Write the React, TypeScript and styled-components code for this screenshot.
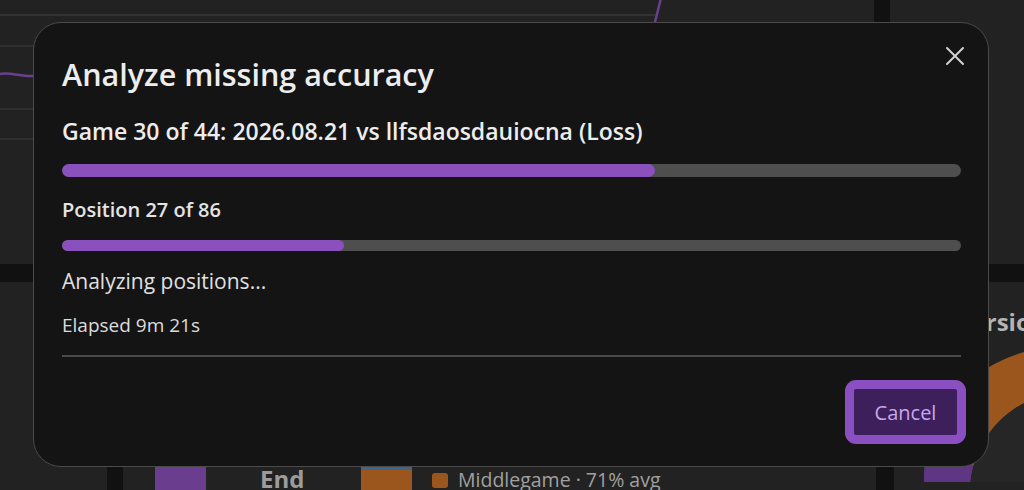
import styled, { createGlobalStyle } from 'styled-components'

const GlobalStyle = createGlobalStyle`
  html, body {
    margin: 0;
    padding: 0;
    background: #111111;
    overflow: hidden;
  }
  body {
    font-family: 'Open Sans', 'Noto Sans', sans-serif;
    color: #ececec;
  }
  * {
    box-sizing: border-box;
  }
`

const gameDone = 29
const gameTotal = 44
const posDone = 27
const posTotal = 86

const App = () => {
  return (
    <>
      <GlobalStyle />
      <Dashboard>
        <TopRow>
          <ChartPanel>
            <svg width="874" height="264" viewBox="0 0 874 264">
              <line x1="0" y1="15" x2="655" y2="15" stroke="#333" strokeWidth="2" />
              <line x1="0" y1="46" x2="874" y2="46" stroke="#333" strokeWidth="1.5" />
              <line x1="0" y1="109" x2="874" y2="109" stroke="#333" strokeWidth="1.5" />
              <line x1="0" y1="139" x2="874" y2="139" stroke="#333" strokeWidth="1.5" />
              <path
                d="M0 74 C 10 72, 22 77, 34 76 L 320 90 L 640 110 L 655 22 L 661 -2"
                fill="none"
                stroke="#6a3f8f"
                strokeWidth="2.5"
              />
            </svg>
          </ChartPanel>
          <Panel />
        </TopRow>
        <BottomRow>
          <Panel />
          <PhasePanel>
            <PhaseRow>
              <PhaseBar $color="#6b3d8f" $width={51} />
              <PhaseLabel>End</PhaseLabel>
              <StackBar>
                <StackTop />
              </StackBar>
              <Legend>
                <Swatch />
                <LegendText>Middlegame · 71% avg</LegendText>
              </Legend>
            </PhaseRow>
          </PhasePanel>
          <ConversionPanel>
            <PanelTitle>Conversion</PanelTitle>
            <Donut width="130" height="200" viewBox="894 290 130 200">
              <path
                d="M 929.8 441.9 A 145 145 0 0 1 1070 355 L 1070 400 A 100 100 0 0 0 973.3 474.6 Z"
                fill="#9a561c"
              />
              <path
                d="M 1070 355 A 145 145 0 0 1 1200 440 L 1150 460 A 100 100 0 0 0 1070 400 Z"
                fill="#9a561c"
              />
              <path
                d="M 925 500 A 145 145 0 0 1 929.8 441.9 L 973.3 474.6 A 100 100 0 0 0 970 500 Z"
                fill="#5f3683"
              />
              <circle cx="1070" cy="500" r="100" fill="#262626" />
            </Donut>
          </ConversionPanel>
        </BottomRow>
      </Dashboard>

      <Dialog role="dialog" aria-label="Analyze missing accuracy">
        <CloseButton aria-label="Close">
          <svg width="20" height="20" viewBox="0 0 20 20">
            <path d="M2 2 L18 18 M18 2 L2 18" stroke="#d2d2d2" strokeWidth="2" strokeLinecap="round" />
          </svg>
        </CloseButton>
        <Title>Analyze missing accuracy</Title>
        <GameLine>Game 30 of 44: 2026.08.21 vs llfsdaosdauiocna (Loss)</GameLine>
        <Track $height={13} $gap={19}>
          <Fill style={{ width: `${(gameDone / gameTotal) * 100}%` }} />
        </Track>
        <PositionLine>Position 27 of 86</PositionLine>
        <Track $height={11} $gap={17}>
          <Fill style={{ width: `${(posDone / posTotal) * 100}%` }} />
        </Track>
        <StatusLine>Analyzing positions...</StatusLine>
        <ElapsedLine>Elapsed 9m 21s</ElapsedLine>
        <Divider />
        <Footer>
          <CancelButton>Cancel</CancelButton>
        </Footer>
      </Dialog>
    </>
  )
}

export default App

const Dashboard = styled.div`
  display: grid;
  grid-template-rows: 264px 1fr;
  row-gap: 18px;
  width: 1024px;
  height: 490px;
  background: #111111;
  overflow: hidden;
`

const TopRow = styled.div`
  display: grid;
  grid-template-columns: 874px 1fr;
  column-gap: 16px;
`

const BottomRow = styled.div`
  display: grid;
  grid-template-columns: 107px 753px 1fr;
  column-gap: 16px;
  & > :last-child {
    margin-left: 2px;
  }
`

const Panel = styled.div`
  background: #222222;
`

const ChartPanel = styled(Panel)`
  overflow: hidden;
  svg {
    display: block;
  }
`

const PhasePanel = styled(Panel)`
  display: flex;
  flex-direction: column;
  justify-content: flex-end;
  overflow: hidden;
`

const PhaseRow = styled.div`
  display: flex;
  align-items: flex-start;
  height: 23px;
  padding-left: 32px;
`

const PhaseBar = styled.div<{ $color: string; $width: number }>`
  width: ${(p) => p.$width}px;
  height: 30px;
  background: ${(p) => p.$color};
`

const PhaseLabel = styled.div`
  width: 47px;
  margin-left: 54px;
  font-size: 24px;
  font-weight: 700;
  line-height: 24px;
  color: #9c9c9c;
  white-space: nowrap;
`

const StackBar = styled.div`
  width: 51px;
  height: 30px;
  margin-left: 54px;
  background: #9a561c;
`

const StackTop = styled.div`
  height: 3px;
  background: #3d668f;
`

const Legend = styled.div`
  display: flex;
  align-items: center;
  gap: 10px;
  margin-left: 20px;
  margin-top: 2px;
`

const Swatch = styled.span`
  width: 16px;
  height: 15px;
  border-radius: 3px;
  background: #9a561c;
`

const LegendText = styled.span`
  font-size: 19.5px;
  line-height: 22px;
  color: #a0a0a0;
  white-space: nowrap;
`

const ConversionPanel = styled(Panel)`
  position: relative;
  overflow: hidden;
`

const PanelTitle = styled.div`
  padding: 26px 0 0 18px;
  font-size: 24px;
  font-weight: 700;
  line-height: 28px;
  color: #b4b4b4;
  white-space: nowrap;
`

const Donut = styled.svg`
  position: absolute;
  left: 0;
  top: 0;
`

const Dialog = styled.div`
  position: fixed;
  left: 33px;
  top: 22px;
  width: 956px;
  height: 445px;
  display: flex;
  flex-direction: column;
  padding: 33px 27px 27px 28px;
  background: #141414;
  border: 1.5px solid #4b4b4b;
  border-radius: 28px;
`

const CloseButton = styled.button`
  position: absolute;
  top: 23px;
  right: 23px;
  display: flex;
  padding: 0;
  border: none;
  background: transparent;
  cursor: pointer;
`

const Title = styled.h2`
  margin: 0;
  font-size: 30.5px;
  font-weight: 600;
  line-height: 36px;
  color: #ededed;
`

const GameLine = styled.div`
  margin-top: 25px;
  font-size: 23px;
  font-weight: 600;
  line-height: 28px;
  color: #ededed;
`

const Track = styled.div<{ $height: number; $gap: number }>`
  margin-top: ${(p) => p.$gap}px;
  height: ${(p) => p.$height}px;
  border-radius: 999px;
  background: #4e4e4e;
  overflow: hidden;
`

const Fill = styled.div`
  height: 100%;
  border-radius: 999px;
  background: #8a50bd;
`

const PositionLine = styled.div`
  margin-top: 20px;
  font-size: 20px;
  font-weight: 600;
  line-height: 26px;
  color: #e4e4e4;
`

const StatusLine = styled.div`
  margin-top: 17px;
  font-size: 21px;
  font-weight: 400;
  line-height: 26px;
  color: #e0e0e0;
`

const ElapsedLine = styled.div`
  margin-top: 19px;
  font-size: 19px;
  font-weight: 400;
  line-height: 24px;
  color: #dcdcdc;
`

const Divider = styled.hr`
  margin: 18px 0 0;
  border: none;
  height: 1.5px;
  background: #4a4a4a;
`

const Footer = styled.div`
  display: flex;
  justify-content: flex-end;
  margin-top: auto;
`

const CancelButton = styled.button`
  width: 111px;
  height: 54px;
  border: 4px solid #8a50c2;
  border-radius: 6px;
  box-shadow: 0 0 0 5px #8a50c2;
  background: #3c1f5b;
  color: #c9a7ec;
  font-family: 'Open Sans', 'Noto Sans', sans-serif;
  font-size: 20px;
  cursor: pointer;
`
